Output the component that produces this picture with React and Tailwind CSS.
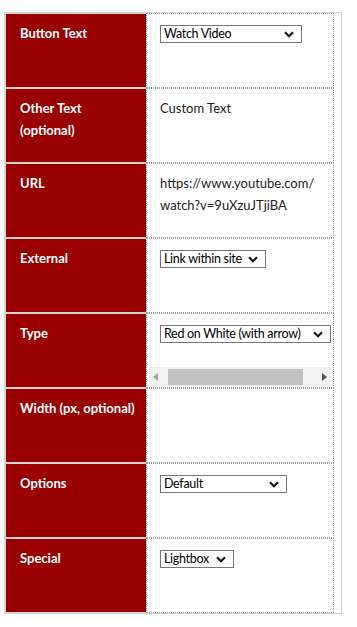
import React from 'react'

// ================================================================
// SMALL PIECES
// ================================================================
const Chevron = () => (
  <svg width="10" height="7" viewBox="0 0 10 7" className="shrink-0">
    <polyline points="1,1.2 5,5.2 9,1.2" fill="none" stroke="#1a1a1a" strokeWidth="2.3" />
  </svg>
)

const FakeSelect = ({ value, width }) => (
  <div
    className="mt-[3px] flex h-[18px] items-center justify-between border border-[#767676] bg-white pl-[3px] pr-[7px] text-[12.5px] leading-[16px] tracking-[-0.3px] text-black"
    style={{ width }}
  >
    <span className="whitespace-nowrap">{value}</span>
    <Chevron />
  </div>
)

const Scrollbar = () => (
  <div className="flex h-[20px] items-center bg-[#f1f1f1]">
    <div className="flex h-full w-[17px] items-center justify-center">
      <svg width="5" height="8" viewBox="0 0 5 8">
        <polygon points="5,0 5,8 0,4" fill="#a3a3a3" />
      </svg>
    </div>
    <div className="ml-[4px] h-[16px] w-[135px] bg-[#c1c1c1]" />
    <div className="flex-1" />
    <div className="flex h-full w-[17px] items-center justify-center">
      <svg width="5" height="8" viewBox="0 0 5 8">
        <polygon points="0,0 0,8 5,4" fill="#505050" />
      </svg>
    </div>
  </div>
)

// ================================================================
// ROW
// ================================================================
const Row = ({ label, children, scroll }) => (
  <div className="flex h-[75px]">
    <div className="w-[141px] shrink-0 border border-r-0 border-[#d4d4d4] bg-[#990000] pl-[14px] pt-[8px] text-[13px] font-bold leading-[22px] text-white">
      {label}
    </div>
    <div className="flex w-[188px] shrink-0 flex-col border border-dotted border-[#9a9a9a]">
      <div className="flex-1 pl-[13px] pt-[8px] text-[13px] leading-[22px] text-[#222]">
        {children}
      </div>
      {scroll && <Scrollbar />}
    </div>
    <div className="flex-1" />
  </div>
)

// ================================================================
// MAIN APP COMPONENT
// ================================================================
function App() {
  return (
    <div className="min-h-screen bg-white font-['Lato',sans-serif]">
      <div className="ml-[4px] mt-[12px] inline-block w-[338px] border border-[#d4d4d4] bg-white">
        <Row label="Button Text">
          <FakeSelect value="Watch Video" width={142} />
        </Row>
        <Row label={<>Other Text<br />(optional)</>}>Custom Text</Row>
        <Row label="URL">
          https://www.youtube.com/
          <br />
          watch?v=9uXzuJTjiBA
        </Row>
        <Row label="External">
          <FakeSelect value="Link within site" width={106} />
        </Row>
        <Row label="Type" scroll>
          <FakeSelect value="Red on White (with arrow)" width={171} />
        </Row>
        <Row label="Width (px, optional)" />
        <Row label="Options">
          <FakeSelect value="Default" width={127} />
        </Row>
        <Row label="Special">
          <FakeSelect value="Lightbox" width={74} />
        </Row>
      </div>
    </div>
  )
}

export default App
